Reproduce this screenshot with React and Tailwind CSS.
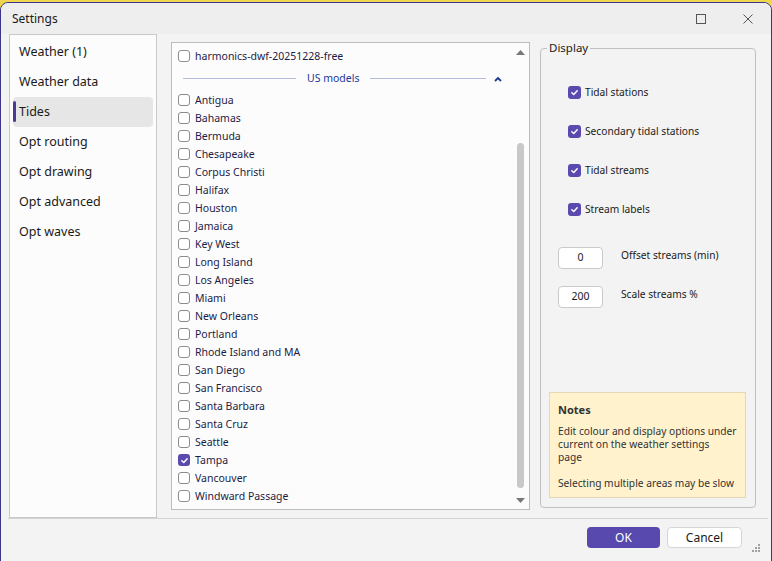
import React from "react";

const navItems = [
  "Weather (1)",
  "Weather data",
  "Tides",
  "Opt routing",
  "Opt drawing",
  "Opt advanced",
  "Opt waves",
];

const places = [
  "Antigua",
  "Bahamas",
  "Bermuda",
  "Chesapeake",
  "Corpus Christi",
  "Halifax",
  "Houston",
  "Jamaica",
  "Key West",
  "Long Island",
  "Los Angeles",
  "Miami",
  "New Orleans",
  "Portland",
  "Rhode Island and MA",
  "San Diego",
  "San Francisco",
  "Santa Barbara",
  "Santa Cruz",
  "Seattle",
  "Tampa",
  "Vancouver",
  "Windward Passage",
];

const Check = ({ checked, big }) => {
  const size = big ? "w-[13px] h-[13px]" : "w-[12px] h-[12px]";
  if (checked) {
    return (
      <span
        className={`${size} shrink-0 rounded-[3px] bg-[#5a4aae] flex items-center justify-center`}
      >
        <svg width="9" height="9" viewBox="0 0 10 10">
          <path
            d="M2 5.2 L4.2 7.3 L8 3"
            fill="none"
            stroke="#ffffff"
            strokeWidth="1.6"
            strokeLinecap="round"
            strokeLinejoin="round"
          />
        </svg>
      </span>
    );
  }
  return (
    <span
      className={`${size} shrink-0 rounded-[3px] border border-[#8c8c8c] bg-white`}
    />
  );
};

const ListRow = ({ label, checked }) => (
  <div className="h-[18px] flex items-center gap-[5px] pl-[6px]">
    <Check checked={checked} />
    <span className="text-[10.5px] text-[#1c1c46] leading-none">{label}</span>
  </div>
);

const Tri = ({ down }) => (
  <svg width="9" height="5" viewBox="0 0 9 5">
    <path d={down ? "M0 0 L9 0 L4.5 5 Z" : "M0 5 L9 5 L4.5 0 Z"} fill="#777777" />
  </svg>
);

const DisplayCheck = ({ label }) => (
  <div className="h-[39px] flex items-center gap-[4px] pl-[27px]">
    <Check checked big />
    <span className="text-[10.2px] text-[#1a1a1a]">{label}</span>
  </div>
);

const NumberBox = ({ value, label }) => (
  <div className="flex items-start pl-[17px]">
    <div className="w-[45px] h-[22px] rounded-[4px] border border-[#cacaca] bg-white flex items-center justify-center text-[10.5px] text-[#1a1a1a]">
      {value}
    </div>
    <span className="ml-[18px] mt-[1px] text-[10.2px] text-[#1a1a1a]">{label}</span>
  </div>
);

const App = () => {
  return (
    <div className="w-[772px] h-[561px] bg-[#f0d64e] font-['Noto_Sans',sans-serif] overflow-hidden">
      <div className="mt-[2px] h-[561px] rounded-t-[8px] border border-[#3c358c] bg-[#f3f3f3] flex flex-col">
        {/* TITLE BAR */}
        <div className="h-[31px] shrink-0 bg-[#eeeeee] rounded-t-[8px] flex items-center pl-[11px] pr-[18px]">
          <span className="text-[12px] text-[#1a1a1a]">Settings</span>
          <div className="ml-auto flex items-center gap-[37px]">
            <svg width="10" height="10" viewBox="0 0 10 10">
              <rect x="0.5" y="0.5" width="9" height="9" fill="none" stroke="#555" />
            </svg>
            <svg width="10" height="10" viewBox="0 0 10 10">
              <path d="M0.5 0.5 L9.5 9.5 M9.5 0.5 L0.5 9.5" stroke="#555" strokeWidth="1" />
            </svg>
          </div>
        </div>

        {/* BODY */}
        <div className="h-[484px] shrink-0 flex pl-[8px]">
          {/* NAV */}
          <div className="w-[148px] h-[484px] bg-[#fcfcfc] border border-[#c9c9c9] pt-[2px]">
            {navItems.map((item) => {
              const active = item === "Tides";
              return (
                <div
                  key={item}
                  className={`relative mx-[3px] h-[30px] rounded-[4px] flex items-center pl-[6px] text-[12.5px] text-[#1a1a1a] ${
                    active ? "bg-[#e6e6e6]" : ""
                  }`}
                >
                  {active && (
                    <span className="absolute left-0 top-[4px] w-[3px] h-[21px] rounded-full bg-[#4a3a90]" />
                  )}
                  {item}
                </div>
              );
            })}
          </div>

          {/* LIST */}
          <div className="ml-[14px] mt-[8px] w-[359px] h-[468px] bg-[#fcfcfc] border border-[#bdbdbd] flex">
            <div className="flex-1 pt-[4px]">
              <ListRow label="harmonics-dwf-20251228-free" />
              <div className="h-[25px] mt-[1px] flex items-center pl-[11px] pr-[10px]">
                <div className="w-[113px] h-px bg-[#b4bddc]" />
                <span className="px-[11px] text-[10.5px] text-[#22399a]">US models</span>
                <div className="flex-1 h-px bg-[#b4bddc]" />
                <svg className="ml-[8px]" width="8" height="6" viewBox="0 0 8 6">
                  <path d="M1 5 L4 2 L7 5" fill="none" stroke="#1f3690" strokeWidth="1.8" />
                </svg>
              </div>
              {places.map((p) => (
                <ListRow key={p} label={p} checked={p === "Tampa"} />
              ))}
            </div>
            <div className="w-[16px] flex flex-col items-center pt-[7px] pb-[6px] mr-[1px]">
              <Tri />
              <div className="mt-[88px] w-[7px] h-[345px] rounded-full bg-[#c8c8c8]" />
              <div className="mt-auto">
                <Tri down />
              </div>
            </div>
          </div>

          {/* DISPLAY GROUP */}
          <fieldset className="ml-[10px] mt-[6px] w-[216px] h-[468px] rounded-[4px] border border-[#c0c0c0] pl-0 flex flex-col">
            <legend className="ml-[6px] px-[2px] text-[11.5px] text-[#1a1a1a] leading-[16px]">
              Display
            </legend>
            <div className="pt-[17px]">
              <DisplayCheck label="Tidal stations" />
              <DisplayCheck label="Secondary tidal stations" />
              <DisplayCheck label="Tidal streams" />
              <DisplayCheck label="Stream labels" />
            </div>
            <div className="mt-[18px] flex flex-col gap-[17px]">
              <NumberBox value="0" label="Offset streams (min)" />
              <NumberBox value="200" label="Scale streams %" />
            </div>
            <div className="mt-auto mb-[9px] ml-[8px] w-[197px] h-[106px] bg-[#fff2cc] border border-[#e2d9ba] px-[8px] pt-[10px] text-[10.2px] leading-[13px] text-[#333333] whitespace-nowrap">
              <div className="font-bold text-[11px] mb-[9px]">Notes</div>
              <div>
                Edit colour and display options under
                <br />
                current on the weather settings
                <br />
                page
              </div>
              <div className="mt-[13px]">Selecting multiple areas may be slow</div>
            </div>
          </fieldset>
        </div>

        {/* FOOTER */}
        <div className="ml-[7px] mr-[3px] h-px bg-[#d2d2d2]" />
        <div className="flex items-start pt-[8px] pl-[586px]">
          <button
            type="button"
            className="w-[73px] h-[21px] rounded-[4px] bg-[#5749ae] text-white text-[12px] flex items-center justify-center"
          >
            OK
          </button>
          <button
            type="button"
            className="ml-[7px] w-[75px] h-[21px] rounded-[4px] bg-white border border-[#d6d6d6] text-[#1a1a1a] text-[12px] flex items-center justify-center"
          >
            Cancel
          </button>
          <svg className="ml-[9px] mt-[17px]" width="10" height="9" viewBox="0 0 10 9">
            <rect x="7" y="0" width="2" height="2" fill="#a0a0a0" />
            <rect x="4" y="3" width="2" height="2" fill="#a0a0a0" />
            <rect x="7" y="3" width="2" height="2" fill="#a0a0a0" />
            <rect x="1" y="6" width="2" height="2" fill="#a0a0a0" />
            <rect x="4" y="6" width="2" height="2" fill="#a0a0a0" />
            <rect x="7" y="6" width="2" height="2" fill="#a0a0a0" />
          </svg>
        </div>
      </div>
    </div>
  );
};

export default App;
